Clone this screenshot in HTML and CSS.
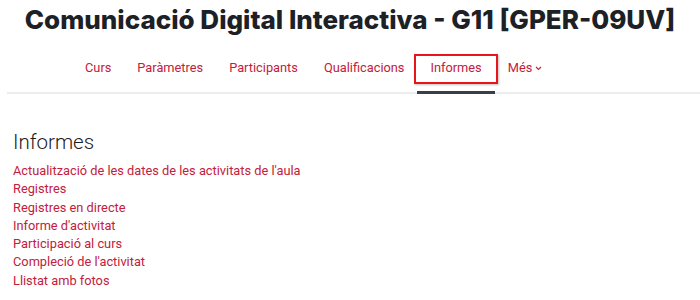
FILE: index.html
```html
<!DOCTYPE html>
<html lang="ca">
<head>
<meta charset="utf-8">
<title>Informes</title>
<link rel="stylesheet" href="styles.css">
</head>
<body>
<header class="page-header">
  <h1 class="course-title">Comunicació Digital Interactiva - G11 [GPER-09UV]</h1>
</header>
<nav class="secondary-nav">
  <ul class="nav-list">
    <li class="nav-item"><a href="#">Curs</a></li>
    <li class="nav-item"><a href="#">Paràmetres</a></li>
    <li class="nav-item"><a href="#">Participants</a></li>
    <li class="nav-item"><a href="#">Qualificacions</a></li>
    <li class="nav-item active"><a href="#">Informes</a><span class="highlight-box"></span></li>
    <li class="nav-item more"><a href="#">Més <svg class="caret" width="7" height="5" viewBox="0 0 7 5"><path d="M1 1 L3.5 3.5 L6 1" fill="none" stroke="currentColor" stroke-width="1.1"/></svg></a></li>
  </ul>
</nav>
<main class="content">
  <h2 class="section-title">Informes</h2>
  <ul class="report-list">
    <li><a href="#">Actualització de les dates de les activitats de l'aula</a></li>
    <li><a href="#">Registres</a></li>
    <li><a href="#">Registres en directe</a></li>
    <li><a href="#">Informe d'activitat</a></li>
    <li><a href="#">Participació al curs</a></li>
    <li><a href="#">Compleció de l'activitat</a></li>
    <li><a href="#">Llistat amb fotos</a></li>
  </ul>
</main>
</body>
</html>
```
FILE: styles.css
```css
html, body {
  margin: 0;
  padding: 0;
  background: #ffffff;
}
body {
  font-family: Roboto, "Liberation Sans", sans-serif;
  color: #1d2125;
}
a {
  color: #c3203c;
  text-decoration: none;
}
.page-header {
  display: flex;
  justify-content: center;
  padding-top: 4px;
}
.course-title {
  margin: 0;
  font-family: Inter, "Liberation Sans", sans-serif;
  font-weight: 800;
  font-size: 26px;
  line-height: 32px;
  color: #1d2125;
}
.secondary-nav {
  margin-left: 7px;
  margin-top: 17px;
  border-bottom: 2px solid #ececec;
}
.nav-list {
  list-style: none;
  margin: 0;
  padding: 0 0 0 65px;
  display: flex;
}
.nav-item {
  position: relative;
  font-size: 12.8px;
  line-height: 16px;
}
.nav-item a {
  display: flex;
  align-items: center;
  gap: 3px;
  padding: 7px 13px 15px;
  border-bottom: 3px solid transparent;
  margin-bottom: -2px;
}
.nav-item.active a {
  border-bottom-color: #3b3e45;
}
.highlight-box {
  position: absolute;
  left: -3px;
  right: -3px;
  top: 1px;
  height: 26px;
  border: 2px solid #e8161c;
  box-shadow: 1px 1px 2px rgba(0,0,0,0.25);
  pointer-events: none;
}
.caret {
  margin-top: 1px;
}
.content {
  padding: 36px 13px 0;
}
.section-title {
  margin: 0 0 8px;
  font-weight: 300;
  font-size: 20.5px;
  line-height: 24px;
  color: #1d2125;
}
.report-list {
  list-style: none;
  margin: 0;
  padding: 0;
}
.report-list li {
  font-size: 12.8px;
  line-height: 18.3px;
}
```
